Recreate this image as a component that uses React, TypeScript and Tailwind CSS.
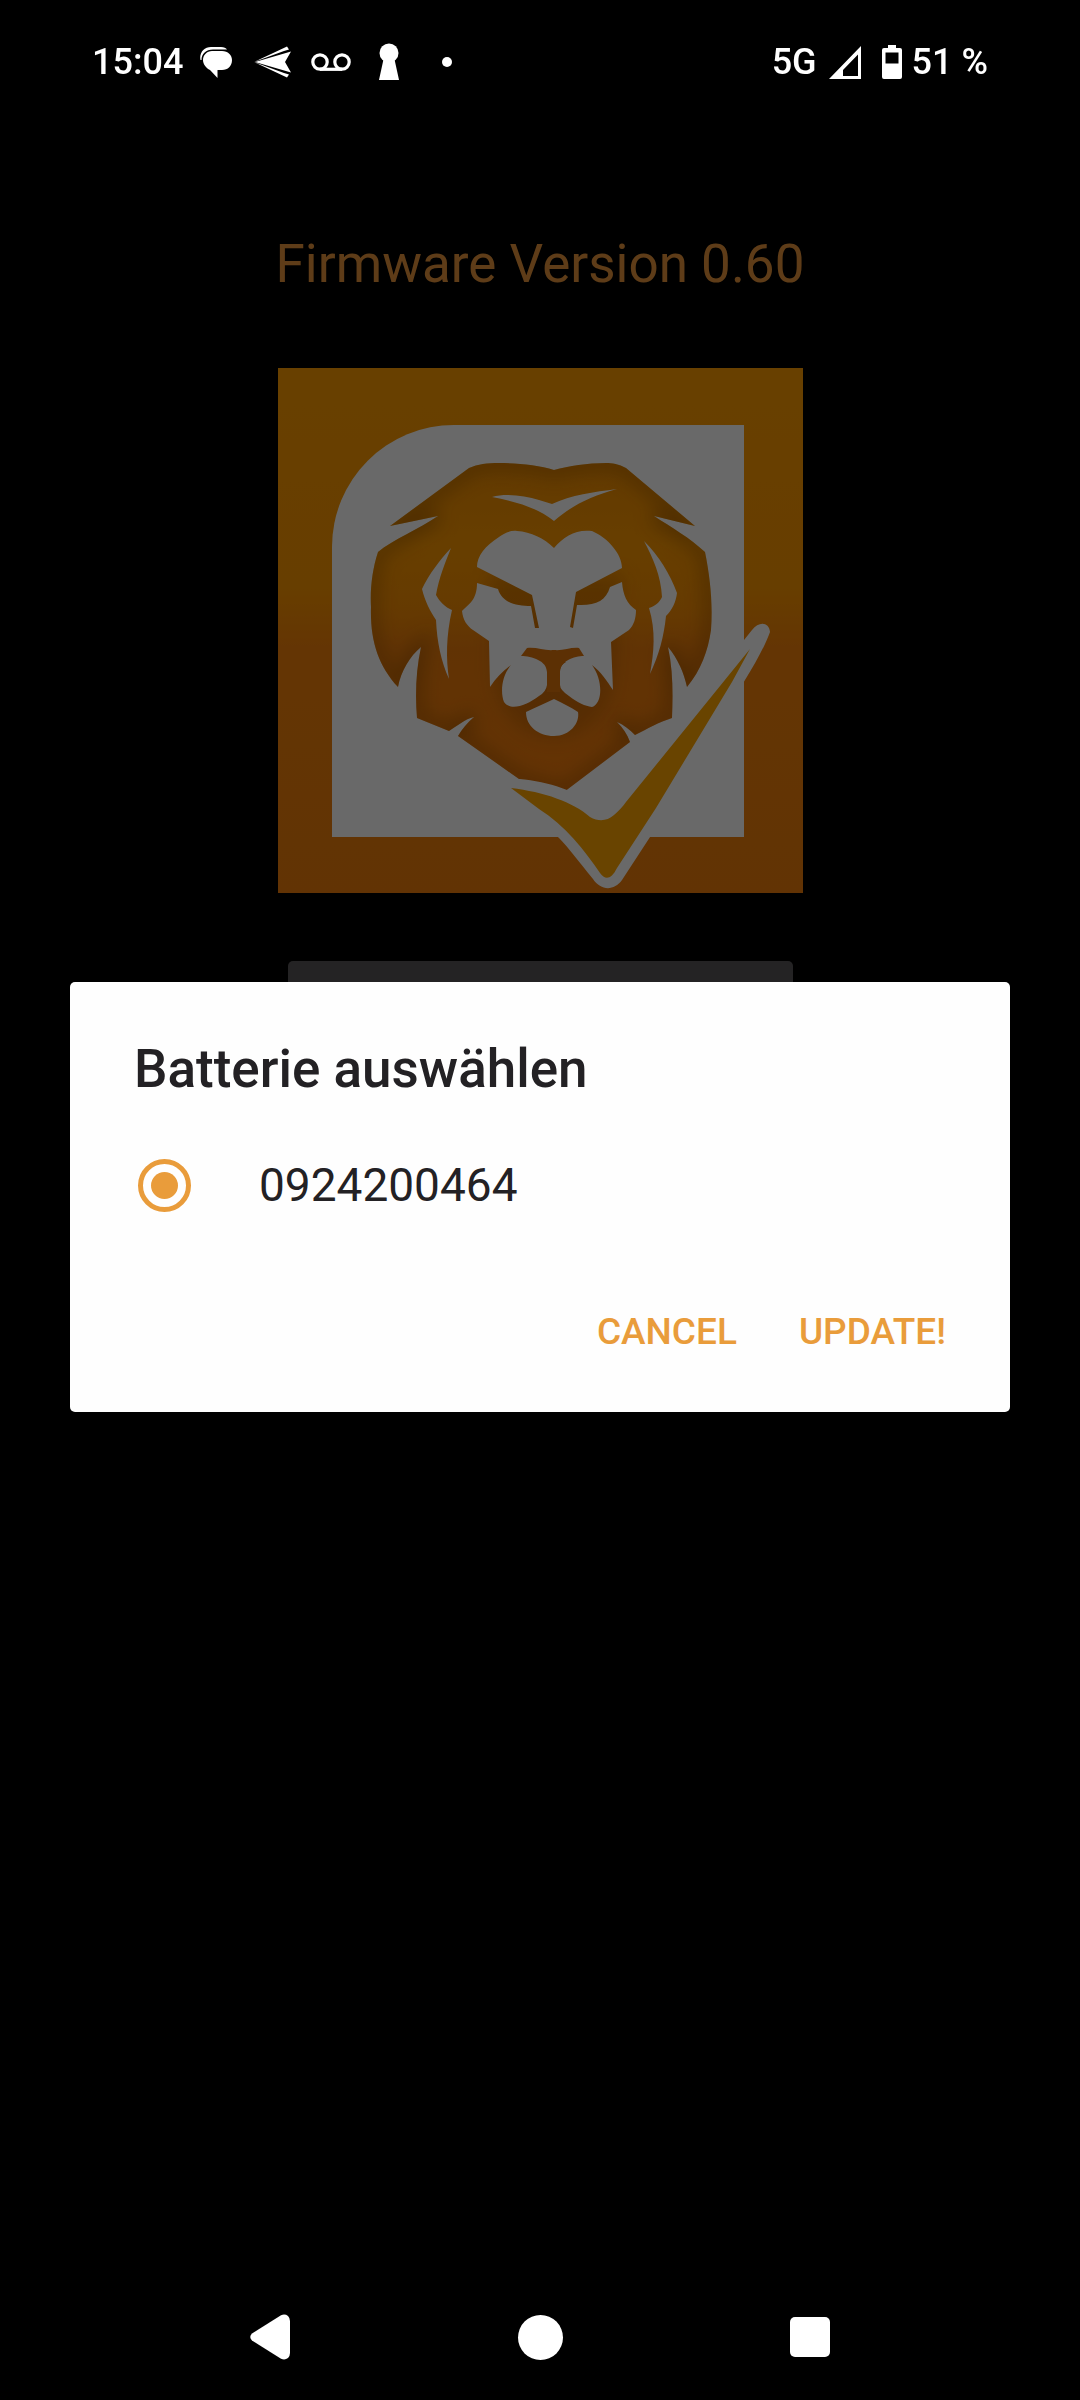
import { useState } from 'react'

const batteries = ['0924200464']

function StatusBar() {
  return (
    <header className="relative z-20 flex h-[124px] items-center justify-between px-[92px] text-[36px] leading-[42px] font-medium text-white">
      <div className="flex items-center">
        <span>15:04</span>
        <svg className="ml-[17px] h-8 w-8" viewBox="0 0 32 32" fill="currentColor">
          <path d="M0.500 14 C-1 7 4 1 11 1 H21 C24 1 26 2 27 3.500 H13 C6 3.500 1.500 8 1.500 14 Z" />
          <path d="M12 5 H22 C28 5 32 9 32 14 C32 20 28 24 22 24 H17.500 V32 L10 24 C6 22 3 18 3 14 C3 9 7 5 12 5 Z" />
        </svg>
        <svg className="ml-[22px] h-8 w-[38px]" viewBox="0 0 38 32" fill="currentColor">
          <path d="M0 16 L33 0.500 L35 3.500 L30 5 Z" />
          <path d="M1 16 L37 5.500 L31 16 L37 26.500 Z" />
          <path d="M0 16 L33 31.500 L35 28.500 L30 27 Z" />
        </svg>
        <svg className="ml-[19px] h-5 w-10" viewBox="0 0 40 20" fill="none" stroke="currentColor" strokeWidth="3.200">
          <circle cx="9" cy="10" r="7.200" />
          <circle cx="31" cy="10" r="7.200" />
          <path d="M9 17.300 H31" />
        </svg>
        <svg className="ml-[27px] h-[38px] w-[22px]" viewBox="0 0 22 38" fill="currentColor">
          <circle cx="11" cy="10" r="9.500" />
          <path d="M6 14 H16 L21 37 H1 Z" />
        </svg>
        <span className="ml-[42px] h-[10px] w-[10px] rounded-full bg-white" />
      </div>
      <div className="flex items-center">
        <span>5G</span>
        <svg className="ml-3 h-[33px] w-8" viewBox="0 0 32 33" fill="currentColor" fillRule="evenodd">
          <path d="M0 33 L32 0 V33 Z M14 30 H29 V8.500 L14 24 Z" />
        </svg>
        <svg className="mr-[10px] ml-[21px] h-[34px] w-5" viewBox="0 0 20 34" fill="currentColor" fillRule="evenodd">
          <path d="M6 0 H14 V3 H18 Q20 3 20 5 V32 Q20 34 18 34 H2 Q0 34 0 32 V5 Q0 3 2 3 H6 Z M3.500 7.500 V18.500 H16.500 V7.500 Z" />
        </svg>
        <span>51 %</span>
      </div>
    </header>
  )
}

function LionLogo() {
  const lion =
    'M555 470 C540 465 518 463 500 463 C488 463 479 464 470 468 L391 526 L439 516 C420 529 393 540 379 552 C373 570 371 590 372 607 C371 640 379 665 399 687 C402 671 411 656 422 647 C417 670 416 695 418 718 L450 731 C458 726 466 719 475 717 C468 723 463 729 459 736 L520 779 L565 792 L631 742 C628 734 624 728 618 722 C625 725 631 730 636 735 C648 729 660 722 673 718 C674 694 674 670 669 647 C679 659 685 673 688 687 C702 670 709 651 712 630 C714 602 711 577 706 552 C691 538 672 527 655 516 L696 526 L627 468 C620 464 613 463 607 463 C588 463 570 466 555 470 Z'
  return (
    <svg className="h-[525px] w-[525px]" viewBox="279 368 525 525" role="img" aria-label="Lion">
      <defs>
        <linearGradient id="tile" x1="0" y1="0" x2="0" y2="1">
          <stop offset="0" stopColor="#fd9c00" />
          <stop offset="0.420" stopColor="#fb9600" />
          <stop offset="0.530" stopColor="#f3820a" />
          <stop offset="1" stopColor="#ee7d0c" />
        </linearGradient>
        <linearGradient id="mane" x1="0" y1="463" x2="0" y2="792" gradientUnits="userSpaceOnUse">
          <stop offset="0" stopColor="#ef8d03" />
          <stop offset="0.250" stopColor="#fb9800" />
          <stop offset="0.440" stopColor="#f68e04" />
          <stop offset="0.560" stopColor="#ec7d0b" />
          <stop offset="1" stopColor="#f47c0b" />
        </linearGradient>
        <clipPath id="mane-clip">
          <path d={lion} />
        </clipPath>
        <filter id="soft" x="-20%" y="-20%" width="140%" height="140%">
          <feGaussianBlur stdDeviation="9" />
        </filter>
      </defs>
      <rect x="279" y="368" width="525" height="525" fill="url(#tile)" />
      <path d="M455 425 H745 V837 H333 V547 A122 122 0 0 1 455 425 Z" fill="#fff" />
      <path d={lion} fill="url(#mane)" />
      <g clipPath="url(#mane-clip)">
        <path d={lion} fill="none" stroke="#8a4a00" strokeOpacity="0.450" strokeWidth="14" filter="url(#soft)" />
        <path d="M490 575 C500 640 485 690 510 715 C530 745 580 745 600 715 C625 690 610 640 625 575 Z" fill="#8a4a00" fillOpacity="0.300" filter="url(#soft)" />
      </g>
      <g fill="#fff">
        {/* crown and side highlights */}
        <path d="M493 497 C508 493 526 496 540 500 L553 504 C572 495 595 492 618 489 C592 496 572 506 555 521 C538 507 514 501 493 497 Z" />
        <path d="M452 548 C441 560 430 574 423 589 C426 601 431 611 437 620 C438 642 442 661 450 679 C447 659 447 636 453 610 C446 607 441 602 437 595 C440 578 446 563 452 548 Z" />
        <path d="M645 541 C660 556 671 574 678 593 C677 602 673 610 667 616 C665 636 660 655 651 674 C655 652 657 631 650 608 C656 606 661 602 663 597 C662 576 654 558 645 541 Z" />
        {/* face */}
        <path d="M555 548 C545 538 532 532 518 531 C511 530 504 534 500 537 C486 546 478 556 478 567 L533 595 L540 628 L536 628 L532 606 C518 606 503 603 499 589 L478 583 C478 600 470 604 463 611 C464 620 468 626 474 630 L490 641 L491 687 C497 678 504 671 512 665 C503 675 501 692 505 702 C511 711 527 706 540 696 Q547 692 548 685 V672 Q548 665 544 662 L556 655 L567 662 Q561 665 561 672 V685 Q561 690 570 696 C579 703 586 706 593 707 C604 703 604 680 593 665 C602 672 608 681 614 690 L612 642 L630 630 C635 625 637 618 637 610 C628 604 624 595 623 582 L611 587 C607 601 596 606 578 605 L574 628 L571 627 L577 592 L623 568 C623 554 609 538 593 531 C577 529 565 536 555 548 Z" />
        <path d="M555 699 C563 703 572 707 579 712 C581 723 571 736 555 736 C539 736 527 726 527 712 C536 708 546 703 555 699 Z" />
      </g>
      {/* nose */}
      <path d="M528 648 C538 647 546 651 555 650 C564 651 572 647 580 648 L585 656 C575 656 561 661 561 672 V692 H548 V672 C548 661 533 656 522 656 Z" fill="#df750b" />
      {/* check mark */}
      <path d="M500 779 L520 779 C551 782 577 790 597 808 C604 813 610 809 615 803 L733 655 L753 630 C760 621 770 622 771 632 C766 646 756 664 746 680 L653 834 L623 880 C615 891 602 891 594 879 C580 862 570 848 560 838 C543 821 522 803 500 779 Z" fill="#fff" />
      <path d="M512 788 C545 792 574 802 591 817 C600 822 608 821 615 815 C620 811 624 806 627 802 L751 649 L733 682 L657 808 L618 868 C612 880 606 880 601 873 C586 851 566 825 540 809 Z" fill="#ffa500" />
    </svg>
  )
}

interface BatteryDialogProps {
  onClose: () => void
}

function BatteryDialog({ onClose }: BatteryDialogProps) {
  const [selected, setSelected] = useState(batteries[0])

  return (
    <div className="fixed inset-0 z-10 flex items-center bg-black/59 px-[70px] pb-[6px]">
      <form
        role="dialog"
        aria-labelledby="dialog-title"
        className="w-full rounded-[5px] bg-[#fefefe] px-16 pt-14 pb-12 text-[#232124]"
        onSubmit={(e) => {
          e.preventDefault()
          onClose()
        }}
      >
        <h2 id="dialog-title" className="text-[53px] leading-[62px] font-medium">
          Batterie auswählen
        </h2>
        <div className="mt-[22px]">
          {batteries.map((battery) => (
            <label key={battery} className="flex h-[126px] items-center gap-[68px] pl-1 text-[46px] leading-[56px]">
              <input
                type="radio"
                name="battery"
                value={battery}
                checked={selected === battery}
                onChange={() => setSelected(battery)}
                className="flex h-[53px] w-[53px] appearance-none items-center justify-center rounded-full border-[5px] border-[#e99c3b] before:h-[27px] before:w-[27px] before:rounded-full checked:before:bg-[#e99c3b]"
              />
              {battery}
            </label>
          ))}
        </div>
        <div className="mt-[52px] flex justify-end gap-[62px] text-[37px] leading-[64px] font-medium text-[#e99c3b]">
          <button type="button" onClick={onClose}>
            CANCEL
          </button>
          <button type="submit">UPDATE!</button>
        </div>
      </form>
    </div>
  )
}

function NavigationBar() {
  return (
    <nav className="relative z-20 grid h-[126px] grid-cols-3 items-center justify-items-center px-[12.500%] text-white">
      <button type="button" aria-label="Back">
        <svg className="h-[46px] w-10" viewBox="0 0 40 46" fill="currentColor">
          <path d="M2 19.500 L31 1.200 Q35 -0.500 38 2 Q40 4 40 7 V39 Q40 42 38 44 Q35 46.500 31 44.800 L2 26.500 Q-1.500 23 2 19.500 Z" />
        </svg>
      </button>
      <button type="button" aria-label="Home" className="h-[45px] w-[45px] rounded-full bg-white" />
      <button type="button" aria-label="Overview" className="h-10 w-10 rounded-[5px] bg-white" />
    </nav>
  )
}

export default function App() {
  const [isOpen, setIsOpen] = useState(true)

  return (
    <div className="flex min-h-screen flex-col bg-black font-['Roboto',sans-serif]">
      <StatusBar />
      <main className="flex flex-1 flex-col items-center pt-[108px]">
        <h1 className="text-[53px] leading-[64px] text-[#e4933a]">Firmware Version 0.60</h1>
        <div className="mt-[72px]">
          <LionLogo />
        </div>
        <button
          type="button"
          aria-label="Update"
          onClick={() => setIsOpen(true)}
          className="mt-[68px] h-[126px] w-[505px] rounded-[5px] bg-[#585658]"
        />
      </main>
      <NavigationBar />
      {isOpen && <BatteryDialog onClose={() => setIsOpen(false)} />}
    </div>
  )
}
